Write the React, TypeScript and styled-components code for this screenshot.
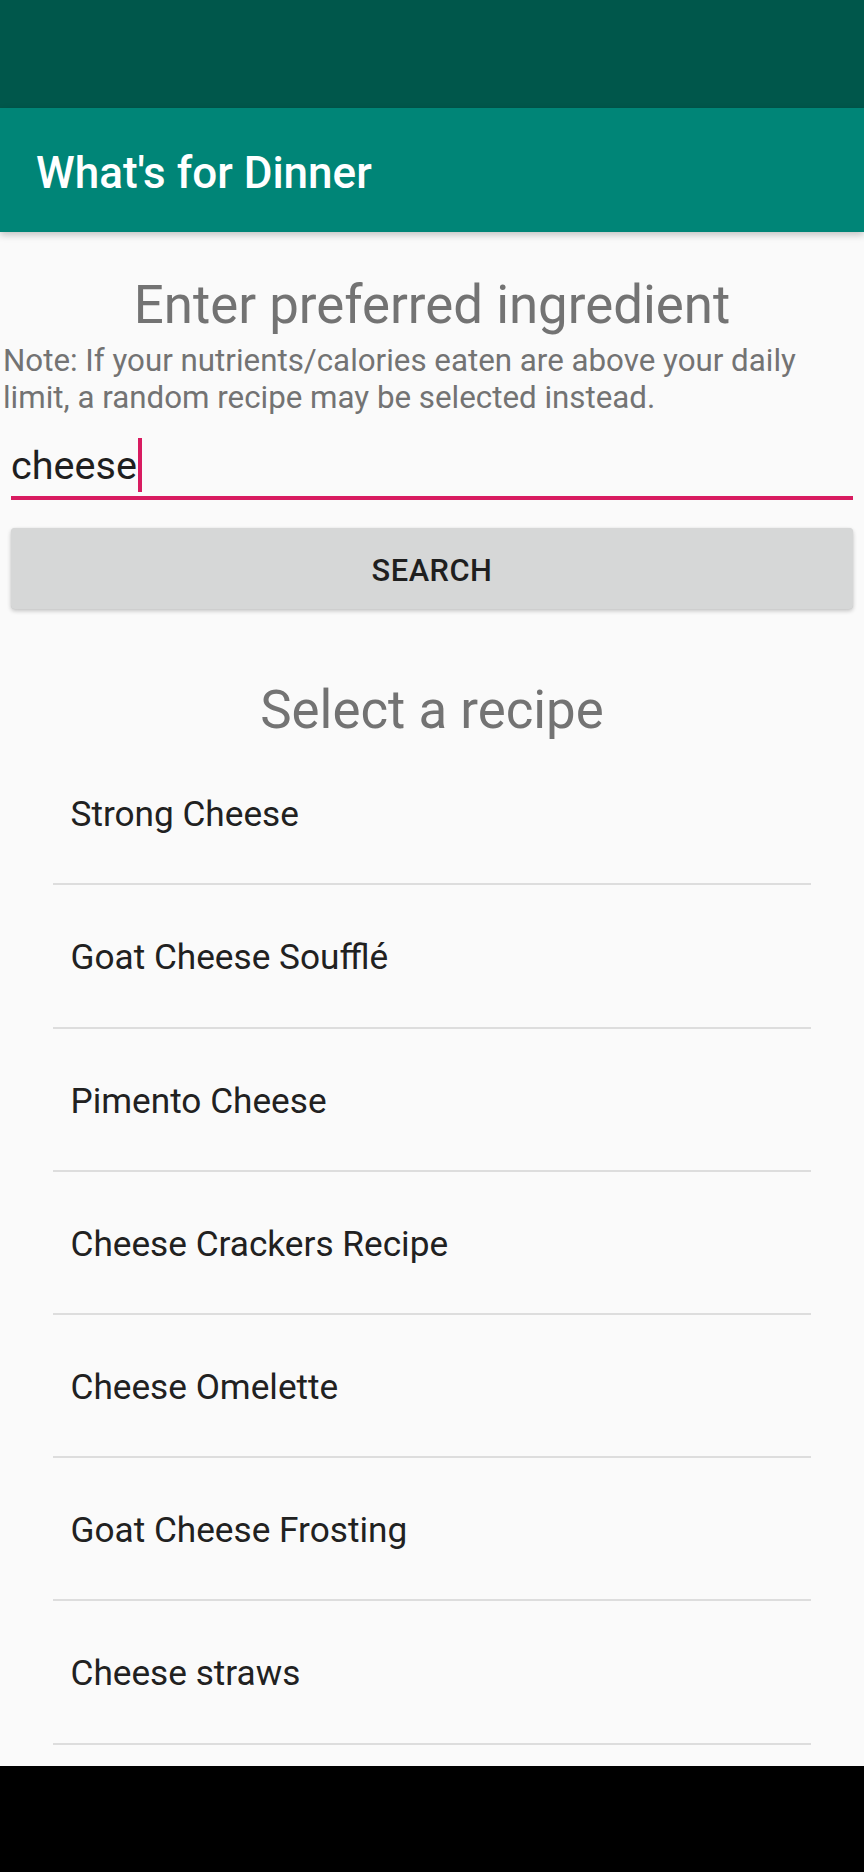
import React from "react";
import styled, { createGlobalStyle } from "styled-components";

const GlobalStyle = createGlobalStyle`
  html, body {
    margin: 0;
    padding: 0;
    background: #fafafa;
  }
  body {
    font-family: Roboto, "Noto Sans", "Liberation Sans", sans-serif;
    -webkit-font-smoothing: antialiased;
  }
  * { box-sizing: border-box; }
`;

const Screen = styled.div`
  width: 864px;
  height: 1872px;
  display: flex;
  flex-direction: column;
  overflow: hidden;
  background: #fafafa;
`;

const StatusBar = styled.div`
  height: 108px;
  flex: 0 0 auto;
  background: #00574b;
`;

const Toolbar = styled.header`
  position: relative;
  z-index: 1;
  height: 124px;
  flex: 0 0 auto;
  display: flex;
  align-items: center;
  padding: 6px 0 0 36px;
  background: #008577;
  box-shadow: 0 3px 7px rgba(0, 0, 0, 0.22);
`;

const Title = styled.h1`
  margin: 0;
  font-size: 44px;
  font-weight: 500;
  color: #ffffff;
  line-height: 52px;
`;

const Content = styled.main`
  flex: 1 1 auto;
  min-height: 0;
  display: flex;
  flex-direction: column;
  overflow: hidden;
  & > * {
    flex-shrink: 0;
  }
`;

const Heading = styled.h2<{ $top: number }>`
  margin: ${(p) => p.$top}px 0 0;
  font-size: 52.8px;
  font-weight: 400;
  line-height: 62px;
  color: #737373;
  text-align: center;
`;

const Note = styled.p`
  margin: 7px 0 0;
  padding: 0 4px 0 3px;
  font-size: 31.3px;
  line-height: 36.6px;
  color: #737373;
`;

const Field = styled.div`
  margin: 27px 11px 0;
  height: 57px;
  padding-bottom: 6.6px;
  border-bottom: 4.4px solid #d81b60;
  display: flex;
  align-items: flex-start;
`;

const FieldText = styled.span`
  font-size: 39.6px;
  line-height: 46.4px;
  color: #1f1f1f;
`;

const Caret = styled.span`
  width: 4.4px;
  height: 54px;
  margin: -5px 0 0 1px;
  background: #d81b60;
  flex: 0 0 auto;
`;

const Button = styled.button`
  margin: 28px 11px 0;
  height: 81px;
  border: none;
  border-radius: 4px;
  background: #d6d7d7;
  box-shadow: 0 2px 4px rgba(0, 0, 0, 0.22), 0 0 1px rgba(0, 0, 0, 0.12);
  font-family: Roboto, "Noto Sans", "Liberation Sans", sans-serif;
  font-size: 30.8px;
  font-weight: 500;
  letter-spacing: 0.5px;
  text-transform: uppercase;
  color: #1f1f1f;
  display: flex;
  align-items: center;
  justify-content: center;
  padding: 4px 0 0;
`;

const RecipeList = styled.ul`
  list-style: none;
  margin: 1px 53px 0 52.5px;
  padding: 0;
`;

const RecipeItem = styled.li`
  height: 143.2px;
  display: flex;
  align-items: center;
  padding: 4px 0 0 18px;
  border-bottom: 2.2px solid #dddddd;
  font-size: 35.2px;
  line-height: 41px;
  color: #212121;
`;

const NavBar = styled.div`
  height: 106px;
  flex: 0 0 auto;
  background: #000000;
`;

const recipes = [
  "Strong Cheese",
  "Goat Cheese Soufflé",
  "Pimento Cheese",
  "Cheese Crackers Recipe",
  "Cheese Omelette",
  "Goat Cheese Frosting",
  "Cheese straws",
];

export default function App() {
  return (
    <>
      <GlobalStyle />
      <Screen>
        <StatusBar />
        <Toolbar>
          <Title>What's for Dinner</Title>
        </Toolbar>
        <Content>
          <Heading $top={42}>Enter preferred ingredient</Heading>
          <Note>
            Note: If your nutrients/calories eaten are above your daily limit, a random recipe may be
            selected instead.
          </Note>
          <Field>
            <FieldText>cheese</FieldText>
            <Caret />
          </Field>
          <Button>Search</Button>
          <Heading $top={70}>Select a recipe</Heading>
          <RecipeList>
            {recipes.map((r) => (
              <RecipeItem key={r}>{r}</RecipeItem>
            ))}
          </RecipeList>
        </Content>
        <NavBar />
      </Screen>
    </>
  );
}
